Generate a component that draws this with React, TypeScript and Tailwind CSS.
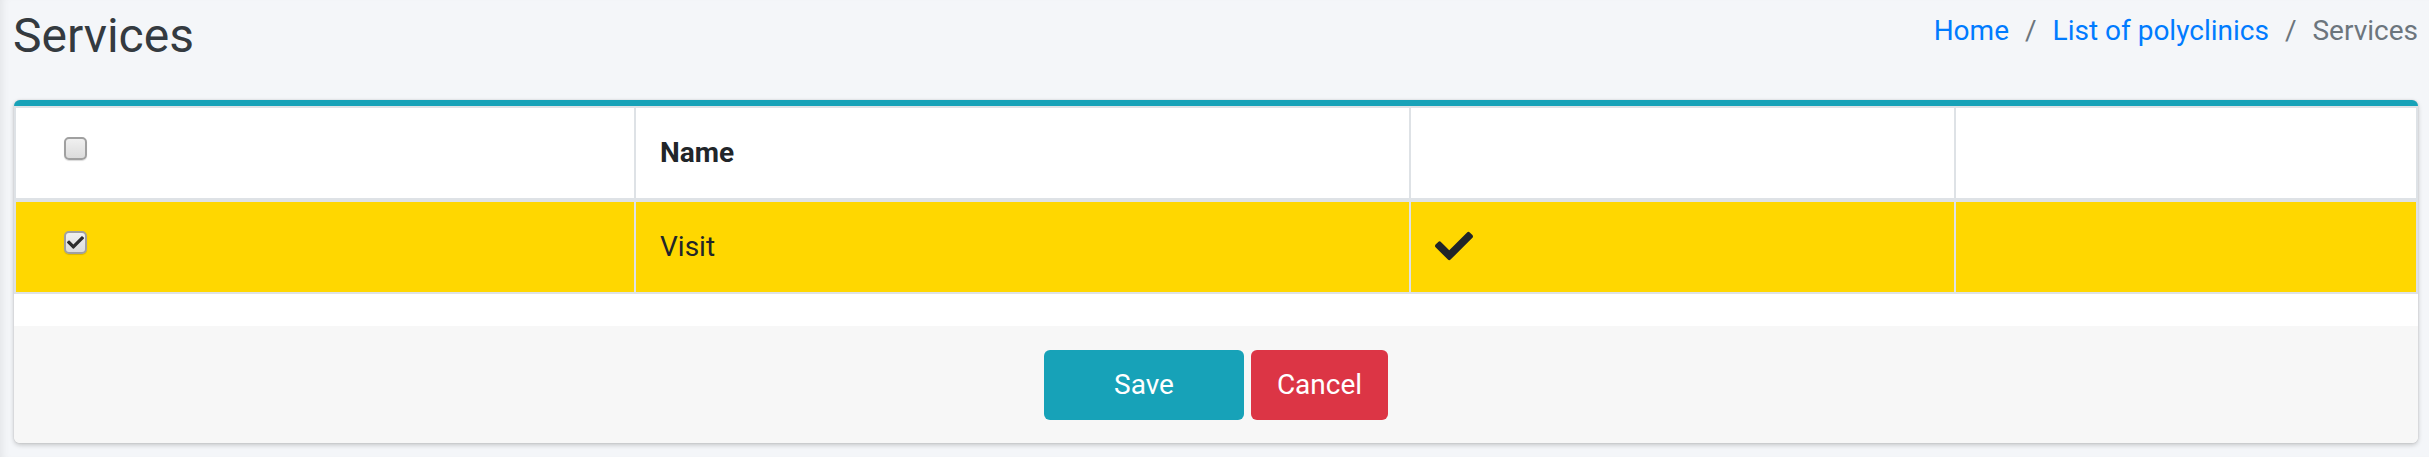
import React from "react";
import { FaCheck } from "react-icons/fa";

const crumbs = [
  { label: "Home", href: "#" },
  { label: "List of polyclinics", href: "#" },
  { label: "Services" },
];

function CheckBox({ checked }: { checked?: boolean }) {
  return (
    <span className="mt-[5px] flex h-[23px] w-[23px] items-center justify-center rounded-[5px] border-2 border-[#a0a0a0] bg-linear-to-b from-[#f0f0f0] to-[#dcdcdc] shadow-[0_1px_1px_rgba(0,0,0,0.15)]">
      {checked && <FaCheck className="text-[17px] text-[#2e2e2e]" />}
    </span>
  );
}

export default function App() {
  return (
    <div className="min-h-screen bg-[#f4f6f9] font-['Roboto',sans-serif] text-[#212529] shadow-[inset_8px_0_8px_-6px_rgba(0,0,0,0.08)]">
      <div className="flex h-[100px] items-start justify-between pr-[11px] pl-[14px]">
        <h1 className="mt-[7px] -ml-[1px] text-[48px] leading-[58px] font-normal text-[#343a40]">
          Services
        </h1>
        <ol className="mt-[10px] flex text-[28px] leading-[42px]">
          {crumbs.map((c, i) => (
            <li key={c.label} className="flex">
              {i > 0 && <span className="px-[16px] text-[#6c757d]">/</span>}
              {c.href ? (
                <a href={c.href} className="text-[#007bff]">
                  {c.label}
                </a>
              ) : (
                <span className="text-[#6c757d]">{c.label}</span>
              )}
            </li>
          ))}
        </ol>
      </div>

      <div className="pr-[11px] pl-[14px]">
        <div className="overflow-hidden rounded-[6px] border-t-[6px] border-[#17a2b8] bg-white shadow-[0_0_2px_rgba(0,0,0,0.13),0_2px_5px_rgba(0,0,0,0.2)]">
          <div className="border-x-2 border-t-2 border-[#dee2e6] text-[28px] leading-[42px]">
            <div className="grid grid-cols-[620px_775px_545px_1fr] border-b-4 border-[#dee2e6]">
              <div className="h-[90px] border-r-2 border-[#dee2e6] pt-[24px] pl-[48px]">
                <CheckBox />
              </div>
              <div className="h-[90px] border-r-2 border-[#dee2e6] px-[24px] pt-[24px] font-bold">
                Name
              </div>
              <div className="h-[90px] border-r-2 border-[#dee2e6]" />
              <div className="h-[90px]" />
            </div>
            <div className="grid grid-cols-[620px_775px_545px_1fr] border-b-2 border-[#dee2e6] bg-[#ffd700]">
              <div className="h-[90px] border-r-2 border-[#dee2e6] pt-[24px] pl-[48px]">
                <CheckBox checked />
              </div>
              <div className="h-[90px] border-r-2 border-[#dee2e6] px-[24px] pt-[24px]">
                Visit
              </div>
              <div className="h-[90px] border-r-2 border-[#dee2e6] px-[24px] pt-[25px]">
                <FaCheck className="text-[38px] text-[#212529]" />
              </div>
              <div className="h-[90px]" />
            </div>
          </div>
          <div className="h-[32px]" />
          <div className="flex justify-center gap-[7px] bg-[#f7f7f7] pt-[24px] pb-[23px]">
            <button className="h-[70px] w-[200px] rounded-[6px] bg-[#17a2b8] text-[28px] text-white">
              Save
            </button>
            <button className="h-[70px] w-[137px] rounded-[6px] bg-[#dc3545] text-[28px] text-white">
              Cancel
            </button>
          </div>
        </div>
      </div>
    </div>
  );
}
